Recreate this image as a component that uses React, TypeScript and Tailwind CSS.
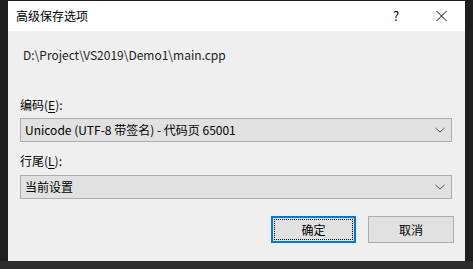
const font = { fontFamily: '"Noto Sans CJK SC", "Noto Sans", sans-serif' };

function Combo({ value }: { value: string }) {
  return (
    <div className="flex h-[24px] w-[432px] items-center justify-between border border-[#adadad] bg-[#e1e1e1] pl-[4px] pr-[4px]">
      <span className="text-[12px] leading-none text-black">{value}</span>
      <svg width="12" height="8" viewBox="0 0 12 8" className="mr-[1px]">
        <path d="M1.5 2 L6 6 L10.5 2" fill="none" stroke="#555" strokeWidth="1" />
      </svg>
    </div>
  );
}

function Label({ text, accessKey }: { text: string; accessKey: string }) {
  return (
    <div className="text-[12px] leading-none text-black">
      {text}(<span className="underline underline-offset-2">{accessKey}</span>):
    </div>
  );
}

export default function App() {
  return (
    <div className="flex h-[269px] w-[473px] flex-col overflow-hidden bg-[#1e1e1e]" style={font}>
      <div className="flex h-[261px] pl-[8px] pt-[1px]">
        <div className="flex w-[457px] flex-col">
          <div className="flex h-[30px] items-center justify-between bg-white pl-[8px]">
            <span className="text-[12px] text-black">高级保存选项</span>
            <div className="flex items-center">
              <span className="w-[46px] text-center text-[13px] text-black">?</span>
              <svg width="46" height="12" viewBox="0 0 46 12">
                <path d="M17.5 1 L27.5 11 M27.5 1 L17.5 11" stroke="#111" strokeWidth="1" />
              </svg>
            </div>
          </div>
          <div className="flex flex-1 flex-col bg-[#efefef] pl-[12px]">
            <div className="mt-[18px] pl-[3px] text-[12px] leading-none text-[#222]">
              D:\Project\VS2019\Demo1\main.cpp
            </div>
            <div className="mt-[38px]">
              <Label text="编码" accessKey="E" />
            </div>
            <div className="mt-[7px]">
              <Combo value="Unicode (UTF-8 带签名) - 代码页 65001" />
            </div>
            <div className="mt-[13px]">
              <Label text="行尾" accessKey="L" />
            </div>
            <div className="mt-[8px]">
              <Combo value="当前设置" />
            </div>
            <div className="mt-[17px] flex gap-[12px] pl-[251px]">
              <button className="flex h-[27px] w-[85px] items-center justify-center border-2 border-[#0078d7] bg-[#e1e1e1] p-[1px]">
                <span className="flex h-full w-full items-center justify-center border border-dotted border-black text-[12px] text-black">
                  确定
                </span>
              </button>
              <button className="flex h-[27px] w-[86px] items-center justify-center border border-[#adadad] bg-[#e1e1e1] text-[12px] text-black">
                取消
              </button>
            </div>
          </div>
        </div>
      </div>
      <div className="flex flex-1 bg-[#2d2d30]" />
    </div>
  );
}
